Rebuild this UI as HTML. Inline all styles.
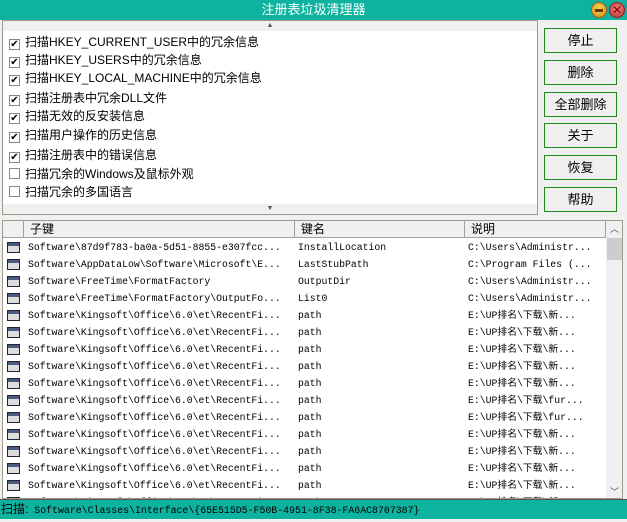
<!DOCTYPE html>
<html><head><meta charset="utf-8"><style>
*{margin:0;padding:0;box-sizing:border-box}
body{width:627px;height:522px;background:#f0f0f0;position:relative;overflow:hidden;font-family:"Liberation Sans","Noto Sans CJK SC","WenQuanYi Zen Hei",sans-serif;font-size:12px;color:#000}
.title{position:absolute;left:0;top:0;width:627px;height:20px;background:#0db39f;color:#fff;text-align:center;font-size:13px;line-height:20px}
.tb{position:absolute;top:2px;width:16px;height:16px;border-radius:50%}
.panel{position:absolute;left:2px;top:20px;width:536px;height:195px;border:1px solid #a09888;background:#fff}
.sb{position:absolute;left:0;width:534px;height:10px;background:#f0f0f0;font-size:7px;text-align:center;line-height:10px;color:#555}
.chk{position:absolute;left:6px;height:18px;line-height:18px;font-size:12px}
.chk i{display:inline-block;width:11px;height:11px;border:1px solid #888;vertical-align:-1px;margin-right:5px;font-style:normal;font-size:10px;line-height:9px;text-align:center;background:#fff}
.btn{position:absolute;left:544px;width:73px;height:25px;border:1px solid #1b8a1b;background:#f0f0f0;text-align:center;line-height:23px;font-size:13px}
.list{position:absolute;left:2px;top:220px;width:621px;height:279px;border:1px solid #a09888;background:#fff;overflow:hidden}
.hdr{position:absolute;top:0;height:17px;background:#f0f0f0;border-right:1px solid #a0a0a0;border-bottom:1px solid #a0a0a0;line-height:17px;padding-left:6px;font-size:12px}
.row{position:absolute;left:0;height:17px;width:603px;font-family:"Liberation Mono","Noto Sans CJK SC",monospace;font-size:9.8px;line-height:17px;white-space:nowrap}
.row span{position:absolute}
.ic{left:4px;top:3px;width:13px;height:11px;border:1px solid #223;background:linear-gradient(#4a5a80 0 3px,#ddd 3px)}
.vs{position:absolute;left:603px;top:0;width:17px;height:277px;background:#f0f0f0}
.status{position:absolute;left:0;top:499px;width:627px;height:20px;background:#0db39f;border-top:1px solid #555;font-family:"Liberation Mono","Noto Sans CJK SC",monospace;font-size:9.9px;line-height:19px;padding-left:1px}
.status b{font-weight:normal;font-family:"Liberation Sans","Noto Sans CJK SC",sans-serif;font-size:12px}
</style></head><body>
<div class="title">注册表垃圾清理器</div>
<div class="tb" style="left:591px;background:radial-gradient(circle at 50% 40%,#f8d860,#d08a10);border:1px solid #a06010"><div style="position:absolute;left:3px;top:6px;width:8px;height:3px;background:#6a3a00"></div></div>
<div class="tb" style="left:609px;background:radial-gradient(circle at 50% 40%,#f08080,#c03030);border:1px solid #902020;color:#700;font-size:12px;line-height:14px;text-align:center">✕</div>
<div class="panel">
<div class="sb" style="top:0">▲</div>
<div class="chk" style="top:12px"><i>✔</i>扫描HKEY_CURRENT_USER中的冗余信息</div>
<div class="chk" style="top:30px"><i>✔</i>扫描HKEY_USERS中的冗余信息</div>
<div class="chk" style="top:48px"><i>✔</i>扫描HKEY_LOCAL_MACHINE中的冗余信息</div>
<div class="chk" style="top:68px"><i>✔</i>扫描注册表中冗余DLL文件</div>
<div class="chk" style="top:86px"><i>✔</i>扫描无效的反安装信息</div>
<div class="chk" style="top:105px"><i>✔</i>扫描用户操作的历史信息</div>
<div class="chk" style="top:125px"><i>✔</i>扫描注册表中的错误信息</div>
<div class="chk" style="top:144px"><i></i>扫描冗余的Windows及鼠标外观</div>
<div class="chk" style="top:162px"><i></i>扫描冗余的多国语言</div>
<div class="sb" style="top:183px">▼</div>
</div>
<div class="btn" style="top:28px">停止</div>
<div class="btn" style="top:60px">删除</div>
<div class="btn" style="top:92px">全部删除</div>
<div class="btn" style="top:123px">关于</div>
<div class="btn" style="top:155px">恢复</div>
<div class="btn" style="top:187px">帮助</div>
<div class="list">
<div class="hdr" style="left:0;width:21px"></div>
<div class="hdr" style="left:21px;width:271px">子键</div>
<div class="hdr" style="left:292px;width:170px">键名</div>
<div class="hdr" style="left:462px;width:141px">说明</div>
<div class="vs"><div style="text-align:center;font-size:9px;height:17px;line-height:17px;color:#555">︿</div><div style="margin-left:1px;width:15px;height:22px;background:#cdcdcd"></div><div style="position:absolute;bottom:0;width:17px;text-align:center;font-size:9px;color:#555">﹀</div></div>
<div id="rows"></div>
</div>
<div class="status"><b>扫描:</b> Software\Classes\Interface\{65E515D5-F50B-4951-8F38-FA6AC8707387}</div>
<script>
var d=[["Software\\87d9f783-ba0a-5d51-8855-e307fcc...","InstallLocation","C:\\Users\\Administr..."],
["Software\\AppDataLow\\Software\\Microsoft\\E...","LastStubPath","C:\\Program Files (..."],
["Software\\FreeTime\\FormatFactory","OutputDir","C:\\Users\\Administr..."],
["Software\\FreeTime\\FormatFactory\\OutputFo...","List0","C:\\Users\\Administr..."]];
var e=["新...","新...","新...","新...","新...","fur...","fur...","新...","新...","新...","新..."];
for(var k=0;k<11;k++)d.push(["Software\\Kingsoft\\Office\\6.0\\et\\RecentFi...","path","E:\\UP排名\\下载\\"+e[k]]);
d.push(["Software\\Kingsoft\\Office\\6.0\\et\\RecentFi...","path","E:\\UP排名\\下载\\新..."]);
var h="";for(var i=0;i<d.length;i++){h+='<div class="row" style="top:'+(18+i*17)+'px"><span class="ic"></span><span style="left:25px">'+d[i][0]+'</span><span style="left:295px">'+d[i][1]+'</span><span style="left:465px">'+d[i][2]+'</span></div>';}
document.getElementById("rows").innerHTML=h;
</script>
</body></html>
